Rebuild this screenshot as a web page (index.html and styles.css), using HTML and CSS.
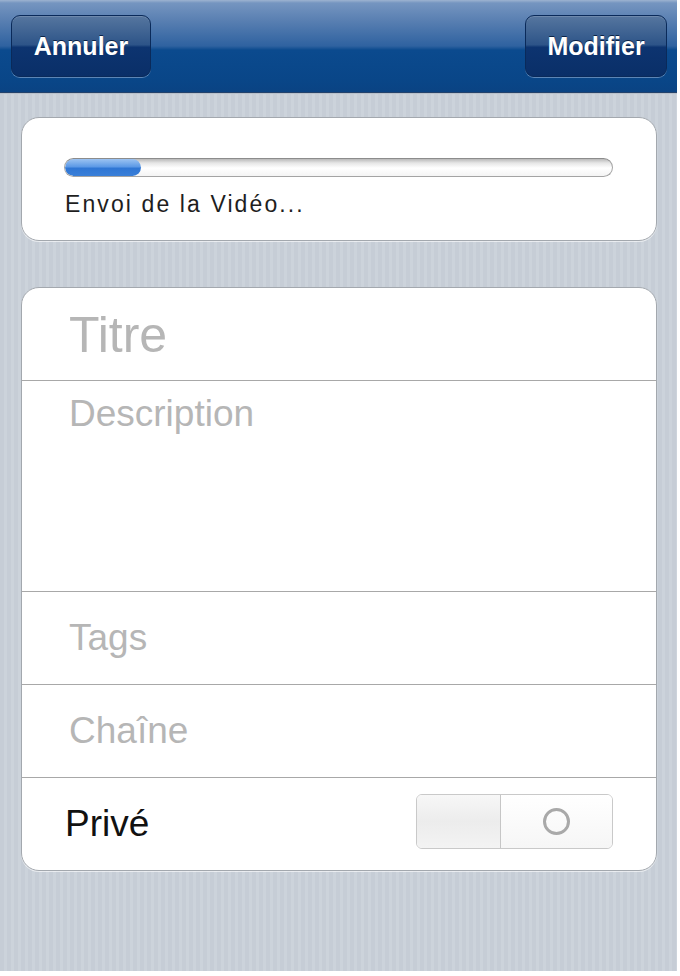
FILE: index.html
```html
<!DOCTYPE html>
<html lang="fr">
<head>
<meta charset="utf-8">
<title>Envoi de la Vidéo</title>
<link rel="stylesheet" href="styles.css">
</head>
<body>
<div class="screen">
  <header class="navbar">
    <button class="navbtn">Annuler</button>
    <button class="navbtn">Modifier</button>
  </header>
  <main class="content">
    <section class="card upload">
      <div class="progress"><div class="fill"></div></div>
      <div class="status">Envoi de la Vidéo...</div>
    </section>
    <section class="card form">
      <div class="row title-row"><span class="ph big">Titre</span></div>
      <div class="row desc-row"><span class="ph">Description</span></div>
      <div class="row"><span class="ph">Tags</span></div>
      <div class="row"><span class="ph">Chaîne</span></div>
      <div class="row private-row">
        <span class="label">Privé</span>
        <div class="toggle">
          <div class="tog-left"></div>
          <div class="tog-right"><span class="ring"></span></div>
        </div>
      </div>
    </section>
  </main>
</div>
</body>
</html>
```

FILE: styles.css
```css
* { box-sizing: border-box; }
html, body { margin: 0; padding: 0; background: #ffffff; }
body { font-family: "Liberation Sans", Arial, sans-serif; width: 680px; height: 976px; overflow: hidden; }

.screen {
  width: 677px;
  height: 971px;
  display: flex;
  flex-direction: column;
  background: repeating-linear-gradient(90deg, #c6cdd6 0px, #c6cdd6 4px, #ccd3db 4px, #ccd3db 7px);
}

.navbar {
  height: 93px;
  flex: none;
  display: flex;
  justify-content: space-between;
  align-items: flex-start;
  padding: 15px 10px 0 11px;
  background: linear-gradient(180deg, #9db3d0 0px, #7595c0 3px, #5a80b2 20px, #2f62a0 46px, #0b4a8e 50px, #094688 80px, #0a4383 92px);
  border-bottom: 1px solid #23426b;
}

.navbtn {
  height: 62px;
  padding: 0;
  border: 1px solid #0a2a5a;
  border-radius: 9px;
  background: linear-gradient(180deg, #56769f 0%, #2d5488 48%, #0d3470 52%, #0a2f68 100%);
  box-shadow: 0 1px 0 rgba(160,185,220,0.55), inset 0 1px 0 rgba(255,255,255,0.15);
  color: #ffffff;
  font-family: "Liberation Sans", Arial, sans-serif;
  font-weight: bold;
  font-size: 25px;
  text-shadow: 0 -1px 0 #0b2346;
}
.navbtn:first-child { width: 140px; }
.navbtn:last-child { width: 142px; }

.content {
  flex: 1;
  display: flex;
  flex-direction: column;
  gap: 46px;
  padding: 23px 20px 0 21px;
  border-top: 1px solid #b8c0ca;
}

.card {
  background: #ffffff;
  border: 1px solid #a3a8ae;
  border-radius: 18px;
  box-shadow: 0 1px 0 rgba(255,255,255,0.6);
}

.upload {
  height: 124px;
  padding: 40px 43px 0 42px;
}

.progress {
  height: 19px;
  border-radius: 10px;
  border: 1px solid #a4a4a4;
  border-top-color: #8c8c8c;
  background: linear-gradient(180deg, #b9b9b9 0px, #e6e6e6 4px, #ffffff 9px, #f4f4f4 17px);
  overflow: hidden;
}
.progress .fill {
  width: 76px;
  height: 100%;
  border-radius: 9px;
  background: linear-gradient(180deg, #9cc3f2 0%, #5d9ae6 45%, #2f76d4 55%, #3a7fd8 100%);
}

.status {
  margin-top: 14px;
  margin-left: 1px;
  font-size: 23px;
  letter-spacing: 2.1px;
  color: #1e1e1e;
}

.form {
  height: 584px;
  display: flex;
  flex-direction: column;
  overflow: hidden;
}

.row {
  height: 93px;
  flex: none;
  display: flex;
  align-items: center;
  padding-left: 47px;
  border-top: 1px solid #a8a8a8;
}
.row:first-child { border-top: none; height: 92px; padding-top: 1px; }

.desc-row {
  height: 211px;
  align-items: flex-start;
  padding-top: 12px;
}

.ph { font-size: 37px; color: #b6b6b6; }
.ph.big { font-size: 50px; }

.private-row {
  flex: 1;
  height: auto;
  justify-content: space-between;
  padding-left: 43px;
  padding-right: 43px;
}
.label { font-size: 37px; color: #111111; }

.toggle {
  width: 197px;
  height: 55px;
  display: flex;
  border: 1px solid #c9c9c9;
  border-radius: 6px;
  overflow: hidden;
  margin-top: -5px;
}
.tog-left {
  width: 84px;
  background: linear-gradient(180deg, #f7f7f7 0%, #ececec 50%, #f3f3f3 100%);
  border-right: 1px solid #c6c6c6;
}
.tog-right {
  flex: 1;
  display: flex;
  align-items: center;
  justify-content: center;
  background: linear-gradient(180deg, #ffffff 0%, #f6f6f6 100%);
}
.ring {
  width: 27px;
  height: 27px;
  border-radius: 50%;
  border: 3px solid #a9a9a9;
}
```
